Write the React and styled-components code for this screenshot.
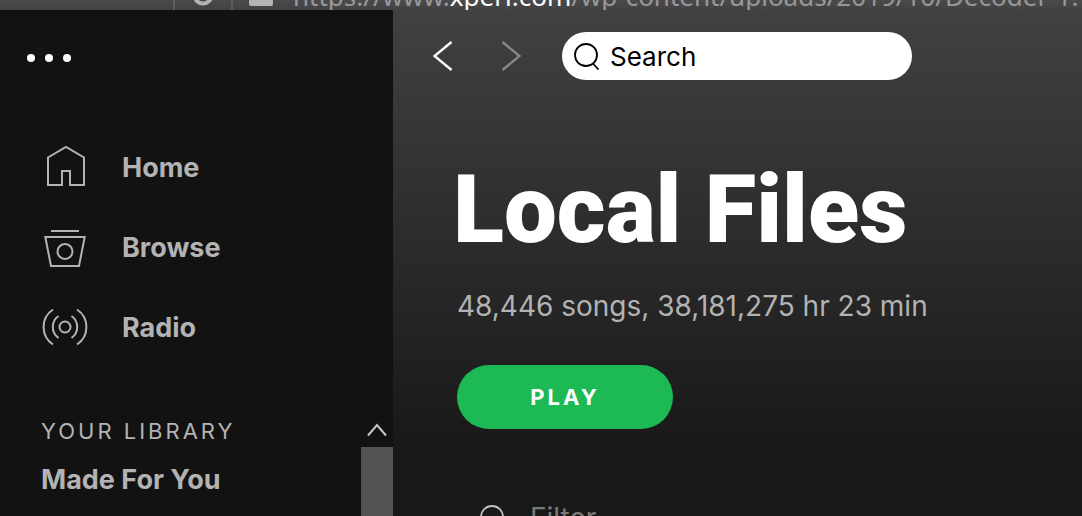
import React from 'react'
import styled, { createGlobalStyle } from 'styled-components'

const App = () => {
    return (
        <>
            <GlobalStyle />
            <Window>
                <AddressBar>
                    <Tool><ReloadIcon /></Tool>
                    <Address>
                        <LockIcon />
                        <Url>https://www.<b>xperi.com</b>/wp-content/uploads/2019/10/Decoder-1.</Url>
                    </Address>
                </AddressBar>

                <Sidebar>
                    <MenuButton aria-label="Menu">
                        <Dot />
                        <Dot />
                        <Dot />
                    </MenuButton>

                    <Nav>
                        <NavLink href="#home"><HomeIcon />Home</NavLink>
                        <NavLink href="#browse"><BrowseIcon />Browse</NavLink>
                        <NavLink href="#radio"><RadioIcon />Radio</NavLink>
                    </Nav>

                    <LibraryPane>
                        <Library>
                            <LibraryTitle>Your Library</LibraryTitle>
                            <LibraryLink href="#made-for-you">Made For You</LibraryLink>
                        </Library>
                        <Scrollbar>
                            <ScrollUp aria-label="Scroll up">
                                <svg width="20" height="14" viewBox="0 0 20 14" fill="none" stroke="#c8c8c8" strokeWidth="2">
                                    <path d="M1 12.5 10 2l9 10.5" />
                                </svg>
                            </ScrollUp>
                            <Thumb />
                        </Scrollbar>
                    </LibraryPane>
                </Sidebar>

                <Main>
                    <TopBar>
                        <ArrowButton aria-label="Back">
                            <svg width="20" height="30" viewBox="0 0 20 30" fill="none" stroke="#fff" strokeWidth="2.4">
                                <path d="M18.5 1 1.5 15l17 14" />
                            </svg>
                        </ArrowButton>
                        <ArrowButton aria-label="Forward" disabled>
                            <svg width="20" height="30" viewBox="0 0 20 30" fill="none" stroke="#878787" strokeWidth="2.4">
                                <path d="M1.5 1l17 14-17 14" />
                            </svg>
                        </ArrowButton>
                        <SearchBox>
                            <SearchIcon color="#000" />
                            <SearchInput type="text" placeholder="Search" aria-label="Search" />
                        </SearchBox>
                    </TopBar>

                    <Title>Local Files</Title>
                    <Summary>48,446 songs, 38,181,275 hr 23 min</Summary>
                    <PlayButton>Play</PlayButton>

                    <FilterBox>
                        <SearchIcon color="#c4c4c4" />
                        <FilterInput type="text" placeholder="Filter" aria-label="Filter" />
                    </FilterBox>
                </Main>
            </Window>
        </>
    )
}

const ReloadIcon = () => (
    <svg width="22" height="22" viewBox="0 0 22 22" fill="none" stroke="#b4b4b6" strokeWidth="4">
        <path d="M17 5a8.5 8.5 0 1 1-12 0" />
    </svg>
)

const LockIcon = () => (
    <svg width="24" height="28" viewBox="0 0 24 28">
        <path d="M6 14V8a6 6 0 0 1 12 0v6" fill="none" stroke="#b4b4b6" strokeWidth="3" />
        <rect y="12" width="24" height="16" rx="2" fill="#b4b4b6" />
    </svg>
)

const HomeIcon = () => (
    <svg width="46" height="46" viewBox="0 0 46 46" fill="none" stroke="#b3b3b3" strokeWidth="2">
        <path d="M6 13.5 24 3l18 10.5V41H28V27h-8v14H6z" />
    </svg>
)

const BrowseIcon = () => (
    <svg width="46" height="46" viewBox="0 0 46 46" fill="none" stroke="#b3b3b3" strokeWidth="2">
        <path d="M9 7h28" />
        <path d="M3.3 13h39.4L37 42H9z" />
        <circle cx="23" cy="27.5" r="7.5" />
    </svg>
)

const RadioIcon = () => (
    <svg width="46" height="46" viewBox="0 0 46 46" fill="none" stroke="#b3b3b3" strokeWidth="2">
        <circle cx="23" cy="23" r="5.5" />
        <path d="M16.5 12a13.5 13.5 0 0 0 0 22M29.5 12a13.5 13.5 0 0 1 0 22" />
        <path d="M11 5.5a21 21 0 0 0 0 35M35 5.5a21 21 0 0 1 0 35" />
    </svg>
)

const SearchIcon = ({ color }) => (
    <svg width="26" height="28" viewBox="0 0 26 28" fill="none" stroke={color} strokeWidth="1.8">
        <circle cx="12" cy="13" r="11" />
        <path d="M18.5 21 24.5 27.5" />
    </svg>
)

const GlobalStyle = createGlobalStyle`
  * {
    box-sizing: border-box;
  }

  body {
    margin: 0;
    overflow: hidden;
    background: #181818;
    font-family: "Inter", "Liberation Sans", sans-serif;
    font-size: 28px;
  }

  button, input {
    padding: 0;
    border: none;
    outline: none;
    background: none;
    font-family: inherit;
  }
`

const Window = styled.div`
  display: grid;
  grid-template-columns: 393px 1fr;
  grid-template-rows: 10px 1fr;
  height: 100vh;
`

/* only the lower edge of the browser toolbar shows above the player */
const AddressBar = styled.header`
  grid-column: 1 / -1;
  display: flex;
  align-items: flex-end;
  overflow: hidden;
  background: linear-gradient(#4a4a4c, #424243);
`

const Tool = styled.div`
  display: flex;
  justify-content: center;
  align-items: flex-end;
  width: 60px;
  height: 40px;
  margin-left: 173px;
  padding-bottom: 4px;
  border: solid #5c5c5e;
  border-width: 0 2px;
`

const Address = styled.div`
  display: flex;
  align-items: flex-end;
  gap: 20px;
  padding-left: 16px;

  svg {
    flex: none;
    margin-bottom: 4px;
  }
`

const Url = styled.span`
  font-family: "Noto Sans", "Open Sans", sans-serif;
  font-size: 26px;
  line-height: 28px;
  white-space: nowrap;
  color: #98989a;

  b {
    font-weight: 400;
    color: #fff;
  }
`

const Sidebar = styled.aside`
  display: flex;
  flex-direction: column;
  min-height: 0;
  background: #121212;
`

const MenuButton = styled.button`
  display: flex;
  align-items: center;
  align-self: flex-start;
  gap: 10px;
  height: 48px;
  margin: 24px 27px 45px;
`

const Dot = styled.span`
  width: 8px;
  height: 8px;
  border-radius: 50%;
  background: #fff;
`

const Nav = styled.nav`
  display: flex;
  flex-direction: column;
`

const NavLink = styled.a`
  display: flex;
  align-items: center;
  gap: 34px;
  height: 80px;
  padding-left: 42px;
  font-size: 27px;
  font-weight: 700;
  color: #b3b3b3;
  text-decoration: none;
`

const LibraryPane = styled.div`
  flex: 1;
  display: flex;
  justify-content: space-between;
  min-height: 0;
  margin-top: 46px;
  overflow: hidden;
`

const Library = styled.div`
  display: flex;
  flex-direction: column;
  padding-left: 41px;
`

const LibraryTitle = styled.h2`
  margin: 0;
  font-size: 22px;
  font-weight: 400;
  line-height: 36px;
  letter-spacing: 3px;
  text-transform: uppercase;
  color: #b3b3b3;
`

const LibraryLink = styled.a`
  font-size: 27px;
  font-weight: 700;
  line-height: 62px;
  color: #b3b3b3;
  text-decoration: none;
`

const Scrollbar = styled.div`
  display: flex;
  flex-direction: column;
  width: 32px;
`

const ScrollUp = styled.button`
  display: flex;
  justify-content: center;
  align-items: center;
  height: 34px;
`

const Thumb = styled.div`
  flex: 1;
  background: #535353;
`

const Main = styled.main`
  display: flex;
  flex-direction: column;
  align-items: flex-start;
  min-height: 0;
  padding-left: 64px;
  overflow: hidden;
  background: linear-gradient(#414141, #181818 440px);

  > * {
    flex-shrink: 0;
  }
`

const TopBar = styled.div`
  display: flex;
  align-items: center;
  height: 48px;
  margin: 22px 0 0 -24px;
`

const ArrowButton = styled.button`
  display: flex;
  align-items: center;
  height: 48px;
  margin-right: 48px;

  & + & {
    margin-right: 41px;
  }
`

const SearchBox = styled.div`
  display: flex;
  align-items: center;
  gap: 10px;
  width: 350px;
  height: 48px;
  padding: 0 12px;
  border-radius: 24px;
  background: #fff;
`

const SearchInput = styled.input`
  flex: 1;
  min-width: 0;
  font-size: 26px;
  color: #000;

  &::placeholder {
    color: #000;
    opacity: 1;
  }
`

const Title = styled.h1`
  margin: 80px 0 0 -4px;
  font-family: "Roboto", "Inter", sans-serif;
  font-size: 94px;
  font-weight: 900;
  line-height: 100px;
  white-space: nowrap;
  color: #fff;
`

const Summary = styled.p`
  margin: 28px 0 0;
  font-size: 28px;
  line-height: 36px;
  white-space: nowrap;
  color: #b3b3b3;
`

const PlayButton = styled.button`
  width: 216px;
  height: 64px;
  margin-top: 41px;
  border-radius: 32px;
  font-size: 22px;
  font-weight: 700;
  letter-spacing: 3px;
  text-transform: uppercase;
  color: #fff;
  background: #1db954;
`

const FilterBox = styled.label`
  display: flex;
  align-items: center;
  gap: 24px;
  margin: 73px 0 0 23px;
`

const FilterInput = styled.input`
  width: 300px;
  font-size: 28px;
  line-height: 32px;
  color: #fff;

  &::placeholder {
    color: #7a7a7a;
    opacity: 1;
  }
`

export default App
